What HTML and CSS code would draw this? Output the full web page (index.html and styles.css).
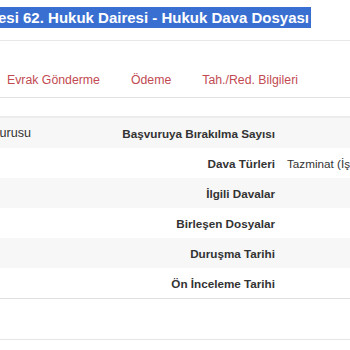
FILE: index.html
```html
<!DOCTYPE html>
<html lang="tr">
<head>
<meta charset="utf-8">
<link rel="stylesheet" href="styles.css">
</head>
<body>
<div class="page">
  <div class="title-row">
    <div class="title"><span>İstanbul Bölge Adliye Mahkemesi 62. Hukuk Dairesi - Hukuk Dava Dosyası</span></div>
  </div>
  <nav class="tabs">
    <a class="tab">Evrak Gönderme</a>
    <a class="tab">Ödeme</a>
    <a class="tab">Tah./Red. Bilgileri</a>
  </nav>
  <div class="table">
    <div class="row odd">
      <div class="c1"><span>Dosya Durusu</span></div>
      <div class="label">Başvuruya Bırakılma Sayısı</div>
      <div class="value"></div>
    </div>
    <div class="row">
      <div class="c1"></div>
      <div class="label">Dava Türleri</div>
      <div class="value">Tazminat (İşçi Alacağı)</div>
    </div>
    <div class="row odd">
      <div class="c1"></div>
      <div class="label">İlgili Davalar</div>
      <div class="value"></div>
    </div>
    <div class="row">
      <div class="c1"></div>
      <div class="label">Birleşen Dosyalar</div>
      <div class="value"></div>
    </div>
    <div class="row odd">
      <div class="c1"></div>
      <div class="label">Duruşma Tarihi</div>
      <div class="value"></div>
    </div>
    <div class="row">
      <div class="c1"></div>
      <div class="label">Ön İnceleme Tarihi</div>
      <div class="value"></div>
    </div>
  </div>
  <div class="footer"></div>
</div>
</body>
</html>
```
FILE: styles.css
```css
html, body {
  margin: 0;
  padding: 0;
  background: #fff;
}
.page {
  width: 350px;
  overflow: hidden;
  font-family: "Liberation Sans", Arial, sans-serif;
  color: #333;
}
.title-row {
  padding-top: 7px;
  height: 33px;
  border-bottom: 1px solid #e8e8e8;
}
.title {
  width: 311px;
  height: 21px;
  background: #3a6fd2;
  display: flex;
  justify-content: flex-end;
  align-items: center;
  overflow: hidden;
}
.title span {
  white-space: nowrap;
  color: #fff;
  font-weight: bold;
  font-size: 15px;
  padding-right: 2px;
}
.tabs {
  display: flex;
  height: 57px;
  box-sizing: border-box;
  align-items: flex-start;
  padding-top: 31px;
  padding-left: 7px;
  gap: 31px;
  border-bottom: 1px solid #e2e2e2;
}
.tab {
  color: #c24a52;
  font-size: 12.3px;
  line-height: 16px;
}
.table {
  margin-top: 18px;
  border-top: 2px solid #ececec;
}
.row {
  display: flex;
  height: 30px;
  align-items: center;
  font-size: 11.7px;
  white-space: nowrap;
}
.row.odd {
  background: #f7f7f7;
}
.c1 {
  width: 31px;
  flex: none;
  display: flex;
  justify-content: flex-end;
  overflow: hidden;
  font-size: 12.6px;
}
.c1 span {
  flex: none;
}
.label {
  width: 244px;
  flex: none;
  text-align: right;
  font-weight: bold;
}
.value {
  padding-left: 12px;
}
.footer {
  height: 40px;
  border-top: 1px solid #e0e0e0;
  border-bottom: 1px solid #e6e6e6;
}
```
